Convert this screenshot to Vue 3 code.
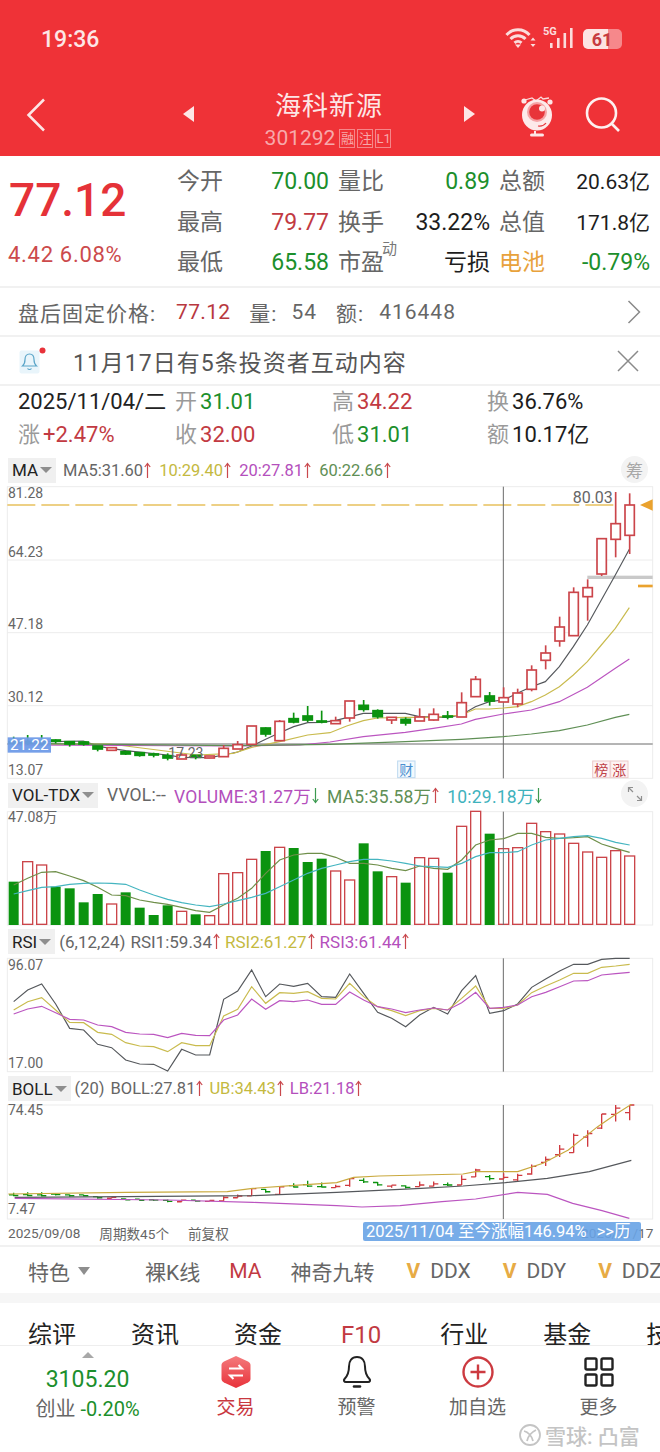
<script setup>
// chart svgs use a 3x viewBox (1980 wide), one bar step = 42 units
const barX = (i) => 41 + 42 * i;
const toPoints = (pairs) => pairs.map((p) => p.join(",")).join(" ");
const series = (ys) => ys.map((y, i) => `${barX(i)},${y}`).join(" ");

const quoteRows = [
  [
    { label: "今开", value: "70.00", tone: "green" },
    { label: "量比", value: "0.89", tone: "green" },
    { label: "总额", value: "20.63亿", tone: "ink small" },
  ],
  [
    { label: "最高", value: "79.77", tone: "red" },
    { label: "换手", value: "33.22%", tone: "ink" },
    { label: "总值", value: "171.8亿", tone: "ink small" },
  ],
  [
    { label: "最低", value: "65.58", tone: "green" },
    { label: "市盈", sup: "动", value: "亏损", tone: "ink" },
    { label: "电池", labelTone: "orange", value: "-0.79%", tone: "green" },
  ],
];

const dayCells = [
  { date: "2025/11/04/二" },
  { label: "开", value: "31.01", tone: "green" },
  { label: "高", value: "34.22", tone: "red" },
  { label: "换", value: "36.76%", tone: "ink" },
  { label: "涨", value: "+2.47%", tone: "red" },
  { label: "收", value: "32.00", tone: "red" },
  { label: "低", value: "31.01", tone: "green" },
  { label: "额", value: "10.17亿", tone: "ink" },
];

const legends = {
  ma: [
    { text: "MA5:31.60", cls: "c-gray", arrow: "up" },
    { text: "10:29.40", cls: "c-yellow", arrow: "up" },
    { text: "20:27.81", cls: "c-purple", arrow: "up" },
    { text: "60:22.66", cls: "c-olive", arrow: "up" },
  ],
  vol: [
    { text: "VVOL:--", cls: "c-gray" },
    { text: "VOLUME:31.27万", cls: "c-purple", arrow: "down" },
    { text: "MA5:35.58万", cls: "c-olive", arrow: "up" },
    { text: "10:29.18万", cls: "c-teal", arrow: "down" },
  ],
  rsi: [
    { text: "(6,12,24)", cls: "c-gray" },
    { text: "RSI1:59.34", cls: "c-gray", arrow: "up" },
    { text: "RSI2:61.27", cls: "c-yellow", arrow: "up" },
    { text: "RSI3:61.44", cls: "c-purple", arrow: "up" },
  ],
  boll: [
    { text: "(20)", cls: "c-gray" },
    { text: "BOLL:27.81", cls: "c-gray", arrow: "up" },
    { text: "UB:34.43", cls: "c-yellow", arrow: "up" },
    { text: "LB:21.18", cls: "c-purple", arrow: "up" },
  ],
};

// high, body top, body bottom, low, colour
const candles = [
  [770, 785, 790, 795, "g"], [765, 784, 790, 795, "g"], [765, 785, 792, 797, "g"], [778, 780, 784, 790, "g"],
  [783, 785, 792, 800, "g"], [785, 786, 792, 797, "g"], [798, 798, 807, 814, "g"], [803, 803, 811, 811, "r"],
  [812, 815, 822, 825, "g"], [818, 818, 826, 830, "g"], [818, 822, 825, 832, "g"], [820, 827, 834, 841, "g"],
  [820, 825, 837, 837, "r"], [825, 826, 832, 838, "g"], [828, 828, 834, 834, "r"], [795, 805, 830, 830, "r"],
  [783, 794, 807, 807, "r"], [738, 738, 793, 793, "r"], [742, 744, 762, 770, "g"], [720, 724, 782, 782, "r"],
  [698, 716, 726, 730, "g"], [678, 708, 720, 726, "g"], [692, 723, 726, 730, "g"], [710, 722, 731, 731, "r"],
  [663, 663, 714, 725, "r"], [660, 676, 688, 695, "g"], [688, 692, 710, 716, "g"], [712, 712, 720, 732, "r"],
  [712, 718, 729, 737, "g"], [685, 711, 723, 723, "r"], [685, 703, 720, 722, "r"], [693, 708, 711, 718, "g"],
  [637, 668, 711, 711, "r"], [588, 598, 650, 650, "r"], [636, 648, 663, 677, "g"], [622, 653, 666, 666, "r"],
  [626, 639, 672, 682, "r"], [556, 570, 628, 634, "r"], [496, 519, 541, 568, "r"], [410, 441, 483, 500, "r"],
  [322, 337, 467, 467, "r"], [298, 323, 350, 422, "r"], [176, 176, 282, 288, "r"], [36, 131, 178, 232, "r"],
  [40, 75, 166, 222, "r"],
];

const maLines = [
  { color: "#55585c", points: [[41,787],[250,783],[300,800],[377,812],[503,825],[545,832],[629,833],[671,825],[713,816],[755,798],[797,778],[839,758],[881,740],[923,728],[965,727],[1005,722],[1090,700],[1216,700],[1258,710],[1342,712],[1384,705],[1426,680],[1468,665],[1510,660],[1552,640],[1594,620],[1636,605],[1678,560],[1720,500],[1762,435],[1804,360],[1846,285],[1888,208]] },
  { color: "#c9bb4e", points: [[41,792],[330,792],[590,825],[700,820],[755,802],[839,785],[923,765],[990,758],[1040,738],[1090,722],[1132,714],[1216,712],[1300,712],[1384,705],[1426,687],[1468,687],[1510,684],[1552,680],[1594,665],[1636,645],[1678,620],[1720,585],[1762,545],[1804,495],[1846,445],[1888,383]] },
  { color: "#bb55c0", points: [[41,795],[700,798],[900,795],[990,786],[1090,770],[1216,757],[1300,745],[1384,732],[1426,718],[1510,702],[1594,690],[1678,665],[1762,622],[1846,565],[1888,537]] },
  { color: "#5f8f55", points: [[41,790],[700,797],[990,793],[1216,785],[1384,778],[1510,770],[1594,762],[1678,752],[1762,735],[1846,712],[1888,703]] },
];

const volume = [
  [305,"g"],[245,"r"],[255,"r"],[320,"g"],[325,"g"],[367,"g"],[342,"g"],[372,"r"],[337,"g"],[383,"g"],[405,"g"],[376,"g"],
  [394,"r"],[403,"g"],[407,"r"],[281,"r"],[278,"r"],[238,"r"],[213,"g"],[202,"r"],[204,"g"],[246,"g"],[236,"g"],[273,"r"],
  [300,"r"],[190,"g"],[274,"g"],[290,"r"],[308,"g"],[233,"r"],[235,"r"],[278,"g"],[139,"r"],[94,"r"],[161,"g"],[206,"r"],
  [203,"r"],[130,"r"],[155,"r"],[162,"r"],[190,"r"],[216,"r"],[232,"r"],[212,"r"],[228,"r"],
];
const volMa5 = [315,295,277,275,288,302,322,345,347,360,367,373,382,392,397,375,355,325,280,240,225,220,220,232,250,250,255,265,272,258,265,268,240,195,180,176,160,160,172,175,173,170,192,205,217];
const volMa10 = [342,332,322,320,313,310,309,310,313,330,345,358,368,375,380,372,362,352,340,320,300,280,265,255,245,238,238,243,250,258,260,262,250,230,218,218,215,195,180,175,170,167,175,187,195];

const rsi1 = [665,630,612,672,745,750,793,803,840,852,853,873,808,825,825,658,633,570,650,612,619,610,650,652,582,640,697,715,740,705,682,702,632,587,700,692,672,622,597,573,553,553,538,535,535];
const rsi2 = [690,665,653,690,727,728,757,763,788,798,800,815,788,797,797,708,688,620,670,638,640,635,655,657,610,650,680,692,707,692,685,690,655,618,685,685,675,638,618,600,580,580,562,558,553];
const rsi3 = [702,687,679,698,718,720,735,740,757,762,763,773,760,766,767,720,705,657,688,662,665,660,673,673,636,660,680,687,698,690,684,690,668,637,685,682,675,650,637,620,603,602,585,581,577];

const bollLines = [
  { color: "#55585c", points: [[44,367],[379,365],[758,362],[1010,352],[1263,340],[1389,333],[1516,323],[1642,310],[1768,290],[1894,256]] },
  { color: "#c9a93e", points: [[25,357],[379,352],[682,350],[758,340],[884,331],[1010,323],[1061,307],[1137,303],[1263,300],[1389,297],[1427,290],[1553,290],[1629,265],[1705,225],[1793,155],[1844,120],[1894,88]] },
  { color: "#bb55c0", points: [[44,370],[505,375],[758,382],[1010,392],[1086,396],[1200,392],[1326,380],[1427,372],[1553,352],[1642,358],[1718,385],[1806,407],[1888,430]] },
];
// same prices as the main chart, on the boll panel's scale
const bollY = (y) => Math.max(90, 55 + 0.398 * (y - 20));
const bollBars = candles.map(([hi, top, bot, lo, c], i) => ({
  x: barX(i),
  hi: bollY(hi),
  lo: bollY(lo),
  open: bollY(c === "r" ? bot : top),
  close: bollY(c === "r" ? top : bot),
  color: c === "r" ? "#d0393f" : "#0b930f",
}));

const toolItems = ["裸K线", "MA", "神奇九转"];
const vipItems = ["DDX", "DDY", "DDZ"];
const tabs = ["综评", "资讯", "资金", "F10", "行业", "基金", "技术"];
</script>

<template>
  <div class="page">
    <header class="top">
      <div class="status">
        <span class="time">19:36</span>
        <svg class="wifi" width="31" height="22" viewBox="0 0 31 22" fill="none" stroke="#fbdcdc" stroke-width="3">
          <path d="M1.500 8C7.500 1 18.500 1 24.500 8" />
          <path d="M5.500 12C9.500 7.800 16.500 7.800 20.500 12" />
          <path d="M9.500 15.800C11.500 14 14.500 14 16.500 15.800" />
          <path d="M13 21l-3-3.500h6z" fill="#fbdcdc" stroke="none" />
          <path d="M28 10.500l-2.500 3h5zM28 20l-2.500-3h5z" fill="#fbdcdc" stroke="none" />
        </svg>
        <span class="net">5G</span>
        <svg class="signal" width="24" height="21" viewBox="0 0 24 21" fill="#fbdcdc">
          <rect x="1" y="15" width="2.600" height="5" />
          <rect x="8" y="10" width="2.600" height="10" />
          <rect x="14.500" y="5" width="2.600" height="15" />
          <rect x="21" y="0" width="2.600" height="20" />
        </svg>
        <div class="battery"><span>61</span></div>
      </div>
      <div class="bar">
        <svg class="back" width="20" height="34" viewBox="0 0 20 34" fill="none" stroke="#fde6e6" stroke-width="2.500">
          <path d="M18 1.500L2.500 17 18 32.500" />
        </svg>
        <i class="tri tri-left"></i>
        <div class="name">
          <div class="title">海科新源</div>
          <div class="code">
            <span class="num">301292</span>
            <span class="flag">融</span>
            <span class="flag">注</span>
            <span class="flag">L1</span>
          </div>
        </div>
        <i class="tri tri-right"></i>
        <svg class="mascot" width="36" height="44" viewBox="0 0 36 44">
          <path d="M6 7l7-2 4 3 5-4 2 2 6-1" fill="none" stroke="#fbd9da" stroke-width="1.300" />
          <circle cx="5" cy="8" r="2.600" fill="#fde6e6" />
          <circle cx="31" cy="9" r="2.600" fill="#fde6e6" />
          <ellipse cx="18" cy="22" rx="15" ry="15.500" fill="#fdeaea" />
          <circle cx="18" cy="19" r="10" fill="#f5a3a5" />
          <circle cx="18" cy="19" r="7.800" fill="#e8353a" />
          <circle cx="23" cy="15.500" r="3" fill="#fde6e6" />
          <path d="M19 33c3 .5 6-.5 8-3" fill="none" stroke="#e8353a" stroke-width="1.200" />
          <path d="M16 38v3" stroke="#fde6e6" stroke-width="2" />
          <rect x="11" y="40.500" width="14" height="3" rx="1.500" fill="#fde6e6" />
        </svg>
        <svg class="search" width="36" height="36" viewBox="0 0 36 36" fill="none" stroke="#fdf0f0" stroke-width="2.600">
          <circle cx="16.500" cy="16" r="14.500" />
          <path d="M27 27l7 7" />
        </svg>
      </div>
    </header>

    <section class="quote">
      <div class="price">
        <div class="last">77.12</div>
        <div class="change">4.42 6.08%</div>
      </div>
      <div class="quote-grid">
        <template v-for="(row, r) in quoteRows" :key="r">
          <template v-for="cell in row" :key="cell.label">
            <span class="q-label" :class="cell.labelTone">{{ cell.label }}<sup v-if="cell.sup">{{ cell.sup }}</sup></span>
            <span class="q-value" :class="cell.tone">{{ cell.value }}</span>
          </template>
        </template>
      </div>
    </section>

    <section class="after">
      <span>盘后固定价格:</span>
      <b class="after-price">77.12</b>
      <span class="after-key">量:</span>
      <b class="after-num first">54</b>
      <span class="after-key amount">额:</span>
      <b class="after-num">416448</b>
      <svg class="chev" width="14" height="24" viewBox="0 0 14 24" fill="none" stroke="#8a8a8a" stroke-width="1.500">
        <path d="M1.500 1l11 11-11 11" />
      </svg>
    </section>

    <section class="notice">
      <svg class="bell" width="28" height="28" viewBox="0 0 28 28" fill="none">
        <rect x="0.500" y="3.500" width="20" height="23" rx="2" fill="#e9f5fb" />
        <path d="M10.500 7c-3 0-4.500 2.500-4.500 5.500 0 3-.8 5-2.500 6.500h14c-1.700-1.500-2.500-3.500-2.500-6.500S13.500 7 10.500 7zM8.500 21.500c1 1.300 3 1.300 4 0" stroke="#5aa5c8" stroke-width="1.200" />
        <circle cx="23.500" cy="3.500" r="3" fill="#e8323a" />
      </svg>
      <span class="notice-text">11月17日有5条投资者互动内容</span>
      <svg class="close" width="22" height="22" viewBox="0 0 22 22" stroke="#8a8a8a" stroke-width="1.500">
        <path d="M1 1l20 20M21 1L1 21" />
      </svg>
    </section>

    <section class="day">
      <div v-for="(cell, i) in dayCells" :key="i" class="day-cell">
        <span v-if="cell.date" class="day-date">{{ cell.date }}</span>
        <template v-else>
          <span class="day-label">{{ cell.label }}</span>
          <span class="day-value" :class="cell.tone">{{ cell.value }}</span>
        </template>
      </div>
    </section>

    <div class="head head-ma">
      <span class="tag">MA<i class="caret"></i></span>
      <div class="legend">
        <span v-for="item in legends.ma" :key="item.text" :class="item.cls">
          {{ item.text }}<svg v-if="item.arrow" class="arrow" :class="item.arrow" width="7" height="17" viewBox="0 0 7 17" fill="none" stroke-width="1.200"><path d="M3.500 16V1.500M.8 5l2.700-3.500L6.200 5" /></svg>
        </span>
      </div>
      <span class="round chip">筹</span>
    </div>
    <svg class="chart" width="660" height="296" viewBox="0 12 1980 888">
      <rect x="22" y="20" width="1936" height="875" fill="#fff" stroke="#ececec" stroke-width="3" />
      <path d="M22 240H1958M22 458H1958M22 677H1958" stroke="#ececec" stroke-width="3" />
      <path d="M22 75H1850" stroke="#e8c15e" stroke-width="4" stroke-dasharray="84 18" />
      <path d="M22 792H1958" stroke="#6a6a6a" stroke-width="3" />
      <path d="M1510 20V895" stroke="#6a6a6a" stroke-width="3" />
      <rect x="1762" y="287" width="196" height="10" fill="#c9c9c9" />
      <rect x="1914" y="314" width="44" height="8" fill="#eaa22e" />
      <path d="M1958 58L1920 75l38 17z" fill="#eaa22e" />
      <polyline v-for="line in maLines" :key="line.color" :points="toPoints(line.points)" fill="none" :stroke="line.color" stroke-width="3.500" />
      <g v-for="(c, i) in candles" :key="i">
        <path :d="`M${barX(i)} ${c[0]}V${c[3]}`" :stroke="c[4] === 'r' ? '#cb454a' : '#0b930f'" stroke-width="5" />
        <rect
          :x="barX(i) - 14"
          :y="c[1]"
          width="28"
          :height="c[2] - c[1]"
          :fill="c[4] === 'r' ? '#fff' : '#0b930f'"
          :stroke="c[4] === 'r' ? '#cb454a' : '#0b930f'"
          stroke-width="5"
        />
      </g>
      <text class="axis" x="24" y="54">81.28</text>
      <text class="axis" x="24" y="231">64.23</text>
      <text class="axis" x="24" y="447">47.18</text>
      <text class="axis" x="24" y="666">30.12</text>
      <text class="axis" x="24" y="885">13.07</text>
      <text class="axis peak" x="1718" y="69">80.03</text>
      <text class="axis" x="505" y="835">17.23</text>
      <rect x="23" y="772" width="130" height="46" fill="#6f9be8" opacity="0.95" />
      <text class="axis flag-text" x="30" y="811">21.22</text>
      <rect x="1193" y="843" width="52" height="50" fill="#f3f9fe" stroke="#bcd8ef" stroke-width="3" />
      <text class="mark" x="1198" y="884" fill="#4a90d0">财</text>
      <rect x="1778" y="843" width="52" height="50" fill="#fdf3f3" stroke="#eccaca" stroke-width="3" />
      <text class="mark" x="1783" y="884" fill="#bf4249">榜</text>
      <rect x="1832" y="843" width="52" height="50" fill="#fdf3f3" stroke="#eccaca" stroke-width="3" />
      <text class="mark" x="1837" y="884" fill="#bf4249">涨</text>
    </svg>

    <div class="head head-vol">
      <span class="tag">VOL-TDX<i class="caret"></i></span>
      <div class="legend">
        <span v-for="item in legends.vol" :key="item.text" :class="item.cls">
          {{ item.text }}<svg v-if="item.arrow" class="arrow" :class="item.arrow" width="7" height="17" viewBox="0 0 7 17" fill="none" stroke-width="1.200"><path d="M3.500 16V1.500M.8 5l2.700-3.500L6.200 5" /></svg>
        </span>
      </div>
      <span class="round">
        <svg width="16" height="16" viewBox="0 0 16 16" fill="none" stroke="#8f8f8f" stroke-width="1.200">
          <path d="M1.500 6V1.500H6M1.500 1.500L6 6M14.500 10v4.500H10M14.500 14.500L10 10" />
        </svg>
      </span>
    </div>
    <svg class="chart" width="660" height="116" viewBox="0 90 1980 348">
      <rect x="22" y="95" width="1936" height="340" fill="#fff" stroke="#ececec" stroke-width="3" />
      <g v-for="(v, i) in volume" :key="i">
        <rect
          v-if="v[1] === 'r'"
          :x="barX(i) - 15"
          :y="v[0]"
          width="30"
          :height="433 - v[0]"
          fill="#fff"
          stroke="#cb454a"
          stroke-width="4"
        />
        <rect v-else :x="barX(i) - 15" :y="v[0]" width="30" :height="435 - v[0]" fill="#0b930f" />
      </g>
      <path d="M1510 95V435" stroke="#6a6a6a" stroke-width="3" />
      <polyline :points="series(volMa5)" fill="none" stroke="#6f8f4a" stroke-width="3.500" />
      <polyline :points="series(volMa10)" fill="none" stroke="#45b5c0" stroke-width="3.500" />
      <text class="axis" x="24" y="127">47.08万</text>
    </svg>

    <div class="head head-rsi">
      <span class="tag">RSI<i class="caret"></i></span>
      <div class="legend">
        <span v-for="item in legends.rsi" :key="item.text" :class="item.cls">
          {{ item.text }}<svg v-if="item.arrow" class="arrow" :class="item.arrow" width="7" height="17" viewBox="0 0 7 17" fill="none" stroke-width="1.200"><path d="M3.500 16V1.500M.8 5l2.700-3.500L6.200 5" /></svg>
        </span>
      </div>
    </div>
    <svg class="chart" width="660" height="116" viewBox="0 531 1980 348">
      <rect x="22" y="535" width="1936" height="340" fill="#fff" stroke="#ececec" stroke-width="3" />
      <path d="M1510 535V875" stroke="#6a6a6a" stroke-width="3" />
      <polyline :points="series(rsi1)" fill="none" stroke="#55585c" stroke-width="3.500" />
      <polyline :points="series(rsi2)" fill="none" stroke="#c9bb4e" stroke-width="3.500" />
      <polyline :points="series(rsi3)" fill="none" stroke="#bb55c0" stroke-width="3.500" />
      <text class="axis" x="24" y="569">96.07</text>
      <text class="axis" x="24" y="865">17.00</text>
    </svg>

    <div class="head head-boll">
      <span class="tag">BOLL<i class="caret"></i></span>
      <div class="legend">
        <span v-for="item in legends.boll" :key="item.text" :class="item.cls">
          {{ item.text }}<svg v-if="item.arrow" class="arrow" :class="item.arrow" width="7" height="17" viewBox="0 0 7 17" fill="none" stroke-width="1.200"><path d="M3.500 16V1.500M.8 5l2.700-3.500L6.200 5" /></svg>
        </span>
      </div>
    </div>
    <svg class="chart" width="660" height="116" viewBox="0 87 1980 348">
      <rect x="22" y="90" width="1936" height="342" fill="#fff" stroke="#ececec" stroke-width="3" />
      <path d="M1510 90V432" stroke="#6a6a6a" stroke-width="3" />
      <path
        v-for="(b, i) in bollBars"
        :key="i"
        :d="`M${b.x} ${b.hi}V${b.lo}M${b.x - 14} ${b.open}H${b.x}M${b.x} ${b.close}H${b.x + 14}`"
        fill="none"
        :stroke="b.color"
        stroke-width="4"
      />
      <polyline v-for="line in bollLines" :key="line.color" :points="toPoints(line.points)" fill="none" :stroke="line.color" stroke-width="3.500" />
      <text class="axis" x="24" y="120">74.45</text>
      <text class="axis" x="24" y="418">7.47</text>
    </svg>

    <div class="foot">
      <span>2025/09/08</span>
      <span>周期数45个</span>
      <span>前复权</span>
      <span class="foot-end">2025/11/17</span>
      <div class="range">2025/11/04 至今涨幅146.94%<em>&gt;&gt;</em>历</div>
    </div>

    <div class="tools">
      <span class="tool-main">特色<i class="caret big"></i></span>
      <i class="tool-line"></i>
      <span v-for="item in toolItems" :key="item" class="tool" :class="{ on: item === 'MA' }">{{ item }}</span>
      <span v-for="item in vipItems" :key="item" class="tool vip"><b>V</b>{{ item }}</span>
    </div>

    <div class="band"></div>

    <div class="tabs">
      <span v-for="tab in tabs" :key="tab" :class="{ on: tab === 'F10' }">{{ tab }}</span>
    </div>

    <nav class="nav">
      <div class="index">
        <i class="index-up"></i>
        <div class="index-num">3105.20</div>
        <div class="index-name">创业 <span>-0.20%</span></div>
      </div>
      <div class="nav-item on">
        <svg width="32" height="34" viewBox="0 0 32 34">
          <defs>
            <linearGradient id="tradeFill" x1="0" y1="0" x2="0" y2="1">
              <stop offset="0" stop-color="#f47a7c" />
              <stop offset="1" stop-color="#e8323a" />
            </linearGradient>
          </defs>
          <path d="M16 1l12 5.500c1.500.7 2.500 2 2.500 3.500v14c0 1.500-1 2.800-2.500 3.500L16 33 4 27.500C2.500 26.800 1.500 25.500 1.500 24V10C1.500 8.500 2.500 7.200 4 6.500z" fill="url(#tradeFill)" />
          <path d="M9 13.500h13l-3.500-3.500M23 20.500H10l3.500 3.500" fill="none" stroke="#fff" stroke-width="2" />
        </svg>
        <span>交易</span>
      </div>
      <div class="nav-item">
        <svg width="32" height="34" viewBox="0 0 32 34" fill="none" stroke="#222" stroke-width="2">
          <path d="M16 2c-5.500 0-8 4.500-8 9.500 0 6.500-2 10-4.500 12.500-1.200 1.400-.5 3 1.500 3h22c2 0 2.700-1.600 1.500-3-2.500-2.500-4.500-6-4.500-12.500C24 6.500 21.500 2 16 2z" />
          <path d="M13 31.500h6" stroke-width="2.600" stroke-linecap="round" />
        </svg>
        <span>预警</span>
      </div>
      <div class="nav-item">
        <svg width="32" height="34" viewBox="0 0 32 34" fill="none" stroke="#cc3a40" stroke-width="2.400">
          <circle cx="16" cy="17" r="14.500" />
          <path d="M16 9.500v15M8.500 17h15" />
        </svg>
        <span>加自选</span>
      </div>
      <div class="nav-item">
        <svg width="32" height="34" viewBox="0 0 32 34" fill="none" stroke="#222" stroke-width="2.400">
          <rect x="2.500" y="3.500" width="11" height="11" rx="1.500" />
          <rect x="18.500" y="3.500" width="11" height="11" rx="1.500" />
          <rect x="2.500" y="19.500" width="11" height="11" rx="1.500" />
          <rect x="18.500" y="19.500" width="11" height="11" rx="1.500" />
        </svg>
        <span>更多</span>
      </div>
      <div class="mark-wm">
        <svg width="22" height="24" viewBox="0 0 22 24" fill="none" stroke="#c4c4c4" stroke-width="1.800">
          <circle cx="11" cy="12" r="10" />
          <path d="M5 8c4 1 8 5 9 10M17 7c-4 2-8 6-9 11" />
        </svg>
        <span>雪球: 凸富</span>
      </div>
    </nav>
  </div>
</template>

<style scoped>
.page {
  position: relative;
  width: 660px;
  height: 1452px;
  overflow: hidden;
  background: #fff;
  color: #222;
  font-family: Roboto, "Noto Sans CJK SC", sans-serif;
}

.top {
  height: 156px;
  background: #ef3237;
  color: #fde6e6;
}

.status {
  display: flex;
  align-items: center;
  height: 78px;
}

.time {
  margin-left: 41px;
  font-size: 23px;
  font-weight: 500;
}

.wifi {
  position: absolute;
  top: 27px;
  left: 505px;
}

.net {
  position: absolute;
  top: 25px;
  left: 543px;
  font-size: 11px;
  font-weight: 700;
  color: #fbdcdc;
}

.signal {
  position: absolute;
  top: 28px;
  left: 549px;
}

.battery {
  position: absolute;
  top: 29px;
  left: 583px;
  display: flex;
  align-items: center;
  width: 39px;
  height: 20px;
  border-radius: 5px;
  background: linear-gradient(90deg, #fde3e3 0 64%, #f6888b 64% 100%);
}

.battery span {
  width: 38px;
  text-align: center;
  color: #c73a40;
  font-size: 18px;
  font-weight: 700;
}

.bar {
  display: flex;
  align-items: flex-start;
}

.back {
  margin: 20px 0 0 26px;
}

.tri {
  display: block;
  width: 0;
  height: 0;
  margin-top: 28px;
  border-top: 8px solid transparent;
  border-bottom: 8px solid transparent;
}

.tri-left {
  margin-left: 137px;
  border-right: 11px solid #fde6e6;
}

.tri-right {
  border-left: 11px solid #fde6e6;
}

.name {
  width: 270px;
  padding-top: 13px;
  text-align: center;
}

.title {
  height: 30px;
  font-size: 26px;
  line-height: 30px;
  letter-spacing: 1px;
}

.code {
  display: flex;
  align-items: center;
  justify-content: center;
  height: 22px;
  margin-top: 6px;
  color: #f7a9ab;
}

.num {
  margin-right: 4px;
  font-size: 21px;
}

.flag {
  width: 16px;
  height: 19px;
  margin-right: 2px;
  border: 1px solid #f58689;
  box-sizing: border-box;
  font-size: 13px;
  line-height: 17px;
  text-align: center;
}

.mascot {
  margin: 15px 0 0 44px;
}

.search {
  margin: 19px 0 0 30px;
}

.quote {
  display: flex;
  height: 132px;
  box-sizing: border-box;
  border-bottom: 2px solid #f1f1f1;
}

.price {
  width: 168px;
  padding-left: 9px;
  box-sizing: border-box;
}

.last {
  margin-top: 16px;
  color: #e53238;
  font-size: 46px;
  font-weight: 500;
  line-height: 56px;
}

.change {
  margin-top: 12px;
  margin-left: -1px;
  color: #cc4a4c;
  font-size: 22px;
  letter-spacing: 0.7px;
  line-height: 30px;
}

.quote-grid {
  display: grid;
  grid-template-columns: 55px 106px 55px 106px 55px 105px;
  grid-auto-rows: 40.5px;
  align-items: center;
  padding-top: 6px;
}

.q-label {
  position: relative;
  padding-left: 9px;
  color: #666;
  font-size: 23px;
  line-height: 30px;
}

.q-label sup {
  position: absolute;
  top: -7px;
  left: 53px;
  color: #777;
  font-size: 15px;
  line-height: 16px;
}

.q-value {
  font-size: 23px;
  line-height: 30px;
  text-align: right;
}

.q-value.small {
  font-size: 21px;
}

.green {
  color: #1c8f2c;
}

.red {
  color: #c23a42;
}

.ink {
  color: #1d1d1d;
}

.orange {
  color: #e8a23c;
}

.after {
  display: flex;
  align-items: center;
  height: 49px;
  padding-left: 18px;
  box-sizing: border-box;
  border-bottom: 2px solid #f1f1f1;
  color: #666;
  font-size: 21px;
  letter-spacing: 1px;
}

.after b {
  font-weight: 400;
}

.after-price {
  margin-left: 20px;
  color: #b8383f;
  letter-spacing: 0.3px;
}

.after-key {
  margin-left: 19px;
}

.after-num {
  margin-left: 15px;
}

.after-num.first {
  margin-left: 14px;
}

.chev {
  margin-left: auto;
  margin-right: 19px;
}

.notice {
  display: flex;
  align-items: center;
  height: 49px;
  padding-left: 19px;
  box-sizing: border-box;
  border-bottom: 2px solid #f1f1f1;
}

.notice-text {
  margin-left: 26px;
  color: #555;
  font-size: 23px;
  letter-spacing: 1px;
}

.close {
  margin-left: auto;
  margin-right: 21px;
}

.day {
  display: grid;
  grid-template-columns: 157px 157px 155px 1fr;
  grid-auto-rows: 33px;
  align-items: center;
  height: 71px;
  margin-top: -1px;
  padding-left: 18px;
  box-sizing: border-box;
}

.day-cell {
  display: flex;
  align-items: center;
  gap: 3px;
  white-space: nowrap;
  font-size: 22px;
  line-height: 33px;
}

.day-date {
  color: #222;
}

.day-label {
  color: #9a9a9a;
}

.head {
  position: relative;
  display: flex;
  align-items: center;
  height: 28px;
  padding-left: 8px;
  white-space: nowrap;
}

.head-vol {
  height: 30px;
}

.head-rsi,
.head-boll {
  height: 31px;
}

.tag {
  display: flex;
  align-items: center;
  height: 25px;
  padding: 0 4px;
  background: #f0f0f0;
  color: #222;
  font-size: 17px;
}

.caret {
  display: inline-block;
  width: 0;
  height: 0;
  margin-left: 2px;
  border-top: 6px solid #8e8e8e;
  border-left: 6px solid transparent;
  border-right: 6px solid transparent;
}

.caret.big {
  margin-left: 8px;
  border-top-width: 8px;
}

.legend {
  display: flex;
  gap: 8px;
  margin-left: 7px;
  font-size: 16.5px;
}

.legend > span {
  display: flex;
  align-items: center;
}

.head-vol .legend {
  gap: 8px;
  margin-left: 9px;
  font-size: 17.5px;
  letter-spacing: 0.2px;
}

.head-rsi .legend {
  gap: 5px;
  margin-left: 4px;
  font-size: 17px;
}

.head-boll .legend {
  gap: 6px;
  margin-left: 4px;
}

.arrow {
  margin-left: 1px;
  stroke: #c9484d;
}

.arrow.down {
  transform: rotate(180deg);
  stroke: #3c9a50;
}

.c-gray {
  color: #666;
}

.c-yellow {
  color: #c4b93f;
}

.c-purple {
  color: #b44fbc;
}

.c-olive {
  color: #5f8f55;
}

.c-teal {
  color: #3fb2bd;
}

.round {
  position: absolute;
  top: 0;
  left: 621px;
  display: flex;
  align-items: center;
  justify-content: center;
  width: 27px;
  height: 27px;
  border-radius: 50%;
  background: #f3f3f3;
}

.chip {
  color: #a8a8a8;
  font-size: 17px;
}

.chart {
  display: block;
}

.axis {
  fill: #666;
  font-family: Roboto, "Noto Sans CJK SC", sans-serif;
  font-size: 42px;
}

.axis.peak {
  font-size: 48px;
}

.axis.flag-text {
  fill: #fff;
  font-size: 46px;
}

.mark {
  font-family: "Noto Sans CJK SC", sans-serif;
  font-size: 42px;
}

.foot {
  position: relative;
  display: flex;
  align-items: center;
  gap: 19px;
  height: 27px;
  padding-left: 8px;
  box-sizing: border-box;
  border-bottom: 2px solid #f1f1f1;
  color: #666;
  font-size: 13.6px;
  white-space: nowrap;
}

.foot-end {
  position: absolute;
  left: 581px;
}

.range {
  position: absolute;
  top: 2px;
  left: 363px;
  width: 278px;
  height: 19px;
  padding-left: 3px;
  box-sizing: border-box;
  background: rgba(104, 163, 230, 0.9);
  color: #fff;
  font-size: 16.5px;
  line-height: 19px;
  border-radius: 2px;
}

.range em {
  margin-left: 10px;
  font-style: normal;
}

.tools {
  display: flex;
  align-items: center;
  height: 46px;
  padding: 2px 0 0 28px;
  box-sizing: border-box;
  color: #666;
  font-size: 21px;
  white-space: nowrap;
}

.tool-main {
  display: flex;
  align-items: center;
}

.tool-line {
  width: 1px;
  height: 30px;
  margin-left: 26px;
  background: #f0f0f0;
}

.tool {
  margin-left: 29px;
}

.tool.on {
  color: #c23a42;
}

.vip {
  margin-left: 32px;
}

.vip b {
  margin-right: 10px;
  color: #e7ab45;
  font-weight: 700;
}

.band {
  height: 10px;
  background: #f6f6f6;
}

.tabs {
  display: flex;
  gap: 55px;
  height: 42px;
  overflow: hidden;
  padding-left: 28px;
  color: #222;
  font-size: 24px;
  line-height: 64px;
  white-space: nowrap;
}

.tabs .on {
  color: #c23a42;
}

.tabs span:nth-child(4) {
  margin: 0 4px 0 4px;
}

.nav {
  position: relative;
  display: grid;
  grid-template-columns: 175px repeat(4, 121px);
  height: 107px;
  box-sizing: border-box;
  border-top: 1px solid #eee;
  background: #fff;
}

.index {
  text-align: center;
}

.index-up {
  display: block;
  width: 0;
  height: 0;
  margin: 6px auto 0;
  border-left: 6px solid transparent;
  border-right: 6px solid transparent;
  border-bottom: 6px solid #a8a8a8;
}

.index-num {
  margin-top: 7px;
  color: #1c8f2c;
  font-size: 23px;
  line-height: 30px;
}

.index-name {
  color: #666;
  font-size: 20px;
  line-height: 28px;
}

.index-name span {
  color: #1c8f2c;
}

.nav-item {
  display: flex;
  flex-direction: column;
  align-items: center;
  padding-top: 9px;
  color: #666;
  font-size: 19px;
}

.nav-item span {
  margin-top: 5px;
  line-height: 28px;
}

.nav-item.on span {
  color: #c9383f;
}

.mark-wm {
  position: absolute;
  top: 74px;
  left: 519px;
  display: flex;
  align-items: center;
  gap: 4px;
  color: #c4c4c4;
  font-size: 21px;
  font-weight: 500;
  white-space: nowrap;
}
</style>

<style>
html,
body {
  margin: 0;
  background: #fff;
}
</style>
